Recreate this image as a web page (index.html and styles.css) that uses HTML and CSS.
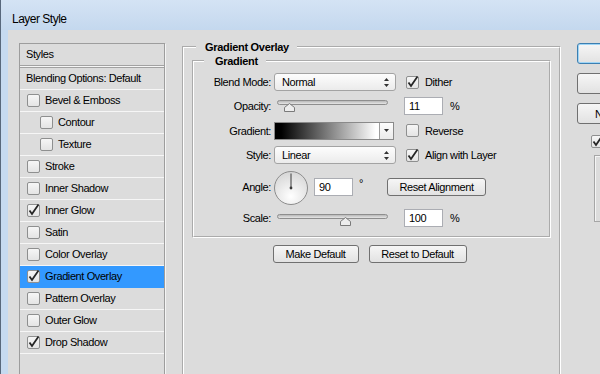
FILE: index.html
```html
<!DOCTYPE html>
<html lang="en">
<head>
    <meta charset="UTF-8">
    <title>Layer Style</title>
    <link rel="stylesheet" href="styles.css">
</head>
<body>
<div class="window">
    <div class="titlebar">Layer Style</div>
    <div class="client">

        <div class="styles">
            <div class="styles-head">Styles</div>
            <div class="styles-blend">Blending Options: Default</div>
            <ul class="fx">
                <li><span class="cb"></span>Bevel &amp; Emboss</li>
                <li class="sub"><span class="cb"></span>Contour</li>
                <li class="sub"><span class="cb"></span>Texture</li>
                <li><span class="cb"></span>Stroke</li>
                <li><span class="cb"></span>Inner Shadow</li>
                <li><span class="cb"><svg class="tick" width="11" height="11" viewBox="0 0 11 11"><path d="M1.5 5.5 4 9 10.5 -0.5"/></svg></span>Inner Glow</li>
                <li><span class="cb"></span>Satin</li>
                <li><span class="cb"></span>Color Overlay</li>
                <li class="sel"><span class="cb"><svg class="tick" width="11" height="11" viewBox="0 0 11 11"><path d="M1.5 5.5 4 9 10.5 -0.5"/></svg></span>Gradient Overlay</li>
                <li><span class="cb"></span>Pattern Overlay</li>
                <li><span class="cb"></span>Outer Glow</li>
                <li><span class="cb"><svg class="tick" width="11" height="11" viewBox="0 0 11 11"><path d="M1.5 5.5 4 9 10.5 -0.5"/></svg></span>Drop Shadow</li>
            </ul>
        </div>

        <fieldset class="group outer">
            <legend>Gradient Overlay</legend>
            <fieldset class="group inner">
                <legend>Gradient</legend>

                <div class="row r1">
                    <span class="lbl">Blend Mode:</span>
                    <div class="slot select"><span>Normal</span><svg width="5" height="9" viewBox="0 0 5 9"><path d="M2.5 0 5 3H0zM0 6h5L2.5 9z"/></svg></div>
                    <label class="chk"><span class="cb"><svg class="tick" width="11" height="11" viewBox="0 0 11 11"><path d="M1.5 5.5 4 9 10.5 -0.5"/></svg></span>Dither</label>
                </div>

                <div class="row r2">
                    <span class="lbl">Opacity:</span>
                    <div class="slot slider"><div class="track"><svg class="thumb" style="left: 11%" width="11" height="9" viewBox="0 0 11 9"><path d="M5.5.5 10.5 4.5V8.5H.5V4.5Z"/></svg></div></div>
                    <span class="num">11</span>
                    <span class="unit">%</span>
                </div>

                <div class="row r3">
                    <span class="lbl">Gradient:</span>
                    <div class="swatch"><span class="grad"></span><span class="swatch-arrow"><svg width="5" height="3" viewBox="0 0 5 3"><path d="M0 0h5L2.5 3z"/></svg></span></div>
                    <label class="chk"><span class="cb"></span>Reverse</label>
                </div>

                <div class="row r4">
                    <span class="lbl">Style:</span>
                    <div class="slot select"><span>Linear</span><svg width="5" height="9" viewBox="0 0 5 9"><path d="M2.5 0 5 3H0zM0 6h5L2.5 9z"/></svg></div>
                    <label class="chk"><span class="cb"><svg class="tick" width="11" height="11" viewBox="0 0 11 11"><path d="M1.5 5.5 4 9 10.5 -0.5"/></svg></span>Align with Layer</label>
                </div>

                <div class="row r5">
                    <span class="lbl">Angle:</span>
                    <svg class="dial" width="34" height="34" viewBox="0 0 34 34">
                        <defs>
                            <radialGradient id="dialfill" cx="50%" cy="75%" r="75%">
                                <stop offset="0" stop-color="#ffffff"/>
                                <stop offset="1" stop-color="#d6d6d6"/>
                            </radialGradient>
                        </defs>
                        <circle cx="17" cy="17" r="16.5" fill="url(#dialfill)" stroke="#8c8c8c"/>
                        <line x1="17" y1="17" x2="17" y2="2.5" stroke="#3a3a3a"/>
                        <circle cx="17" cy="17" r="1.4" fill="#3a3a3a"/>
                    </svg>
                    <span class="num">90</span>
                    <span class="deg">°</span>
                    <button class="btn reset-align">Reset Alignment</button>
                </div>

                <div class="row r6">
                    <span class="lbl">Scale:</span>
                    <div class="slot slider"><div class="track"><svg class="thumb" style="left: 62%" width="11" height="9" viewBox="0 0 11 9"><path d="M5.5.5 10.5 4.5V8.5H.5V4.5Z"/></svg></div></div>
                    <span class="num">100</span>
                    <span class="unit">%</span>
                </div>
            </fieldset>

            <div class="defaults">
                <button class="btn make-default">Make Default</button>
                <button class="btn reset-default">Reset to Default</button>
            </div>
        </fieldset>

        <div class="side">
            <button class="btn side-btn default">OK</button>
            <button class="btn side-btn">Cancel</button>
            <button class="btn side-btn">New Style...</button>
            <label class="chk preview-chk"><span class="cb"><svg class="tick" width="11" height="11" viewBox="0 0 11 11"><path d="M1.5 5.5 4 9 10.5 -0.5"/></svg></span>Preview</label>
            <div class="preview"></div>
        </div>

    </div>
</div>
</body>
</html>
```

FILE: styles.css
```css
* {
    box-sizing: border-box;
}
body {
    margin: 0;
    width: 600px;
    height: 374px;
    overflow: hidden;
    font-family: "Liberation Sans", Arial, sans-serif;
    font-size: 11px;
    letter-spacing: -0.4px;
    color: #000;
    background: #c6daf0;
}
.window {
    width: 700px;
    height: 374px;
    border-left: 1px solid #58687c;
    background: #c6daf0;
}
.titlebar {
    height: 30px;
    padding: 12px 0 0 11px;
    font-size: 12px;
    line-height: 14px;
    letter-spacing: -0.5px;
    background: linear-gradient(#d4e3f4, #c4d8ee);
}
.client {
    margin-left: 7px;
    height: 344px;
    padding: 11px 0 0 11px;
    background: #dcdcdc;
    display: flex;
    align-items: flex-start;
}

/* styles list on the left */
.styles {
    flex: none;
    width: 146px;
    height: 340px;
    margin-top: 2px;
    border: 1px solid #9d9d9d;
    box-shadow: 1px 1px 0 #f4f4f4;
}
.styles-head {
    height: 22px;
    padding-left: 6px;
    line-height: 20px;
    border-bottom: 1px solid #a2a2a2;
    box-shadow: 0 1px 0 #f6f6f6;
}
.styles-blend {
    height: 23px;
    margin-top: 1px;
    padding-left: 6px;
    line-height: 20px;
    border-top: 1px solid #a2a2a2;
    border-bottom: 1px solid #f6f6f6;
}
.fx {
    list-style: none;
    margin: 0;
    padding: 0;
}
.fx li {
    height: 22px;
    padding: 0 0 2px 7px;
    display: flex;
    align-items: center;
    gap: 5px;
    border-bottom: 1px solid #f6f6f6;
}
.fx li .cb {
    margin-top: 2px;
}
.fx li.sub {
    padding-left: 20px;
}
.fx li.sel {
    background: #3399ff;
    border-bottom-color: #3399ff;
}

/* checkbox */
.cb {
    flex: none;
    width: 13px;
    height: 13px;
    border: 1px solid #8e8f8f;
    border-radius: 2px;
    background: linear-gradient(#f6f6f6, #e4e4e4);
    display: block;
}
.tick {
    display: block;
    overflow: visible;
}
.tick path {
    fill: none;
    stroke: #262626;
    stroke-width: 1.8;
}
.chk {
    display: flex;
    align-items: center;
    gap: 6px;
    margin-left: 2px;
}

/* group boxes */
.group {
    margin: 0;
    padding: 0;
    min-width: 0;
    border: 2px groove #ffffff;
}
.group legend {
    font-weight: bold;
    letter-spacing: -0.3px;
    line-height: 12px;
}
.outer {
    flex: none;
    width: 379px;
    margin-left: 17px;
    padding: 2px 8px 200px;
}
.outer > legend {
    margin-left: 4px;
    padding: 0 8px 0 9px;
}
.inner {
    padding: 3px 0 7px;
}
.inner > legend {
    margin-left: 10px;
    padding: 0 8px 0 11px;
}

/* rows in the gradient box */
.row {
    display: flex;
    align-items: center;
}
.r1 { height: 24px; }
.r2 { height: 24px; }
.r3 { height: 25px; }
.r4 { height: 24px; }
.r5 { height: 40px; }
.r6 { height: 22px; }
.lbl {
    flex: none;
    width: 77px;
    margin-right: 3px;
    text-align: right;
}
.slot {
    flex: none;
    width: 122px;
    margin-right: 8px;
}
.select {
    height: 18px;
    padding: 0 6px 0 7px;
    border: 1px solid #a3a3a3;
    border-radius: 3px;
    background: linear-gradient(#fdfdfd, #ebebeb);
    display: flex;
    align-items: center;
    justify-content: space-between;
}
.select path,
.swatch-arrow path {
    fill: #333;
}
.slider {
    height: 12px;
}
.r6 .slider {
    margin-top: 4px;
}
.track {
    position: relative;
    height: 5px;
    margin: 0 8px 0 3px;
    border: 1px solid #8e8e8e;
    border-radius: 3px;
    background: linear-gradient(#b8b8b8, #e6e6e6);
}
.thumb {
    position: absolute;
    top: 2px;
    margin-left: -5.5px;
    display: block;
}
.thumb path {
    fill: #ededed;
    stroke: #7a7a7a;
}
.num {
    flex: none;
    width: 39px;
    height: 18px;
    padding-left: 4px;
    line-height: 16px;
    border: 1px solid #abadb3;
    background: #ffffff;
}
.unit {
    margin-left: 7px;
}
.swatch {
    flex: none;
    width: 120px;
    height: 18px;
    margin-right: 10px;
    border: 1px solid #8a8a8a;
    display: flex;
}
.grad {
    flex: 1;
    background: linear-gradient(to right, #000 6%, #fff 97%);
}
.swatch-arrow {
    width: 14px;
    border-left: 1px solid #9c9c9c;
    background: linear-gradient(#fdfdfd, #ebebeb);
    display: flex;
    align-items: center;
    justify-content: center;
}
.dial {
    flex: none;
    display: block;
    margin: 2px 6px 0 0;
}
.deg {
    flex: none;
    width: 34px;
    padding-left: 6px;
    align-self: flex-start;
    margin-top: 10px;
}

/* buttons */
.btn {
    font-family: inherit;
    font-size: 11px;
    letter-spacing: -0.4px;
    color: #000;
    height: 18px;
    padding: 0;
    border: 1px solid #707070;
    border-radius: 3px;
    background: linear-gradient(#f6f6f6, #e2e2e2);
}
.reset-align {
    width: 99px;
}
.defaults {
    margin-top: 7px;
    padding-right: 4px;
    display: flex;
    justify-content: center;
    gap: 10px;
}
.make-default {
    width: 86px;
}
.reset-default {
    width: 98px;
}

/* right column */
.side {
    flex: none;
    width: 90px;
    margin-left: 16px;
    padding-top: 2px;
    display: flex;
    flex-direction: column;
}
.side-btn {
    height: 21px;
    margin-bottom: 9px;
}
.side-btn.default {
    border-color: #3c7fb1;
    box-shadow: inset 0 0 0 1px #9fd5f6;
}
.preview-chk {
    margin: 2px 0 0 14px;
}
.preview {
    width: 70px;
    height: 67px;
    margin: 7px 0 0 17px;
    border: 1px solid #a6a6a6;
    box-shadow: inset 1px 1px 0 #f4f4f4;
}
```
